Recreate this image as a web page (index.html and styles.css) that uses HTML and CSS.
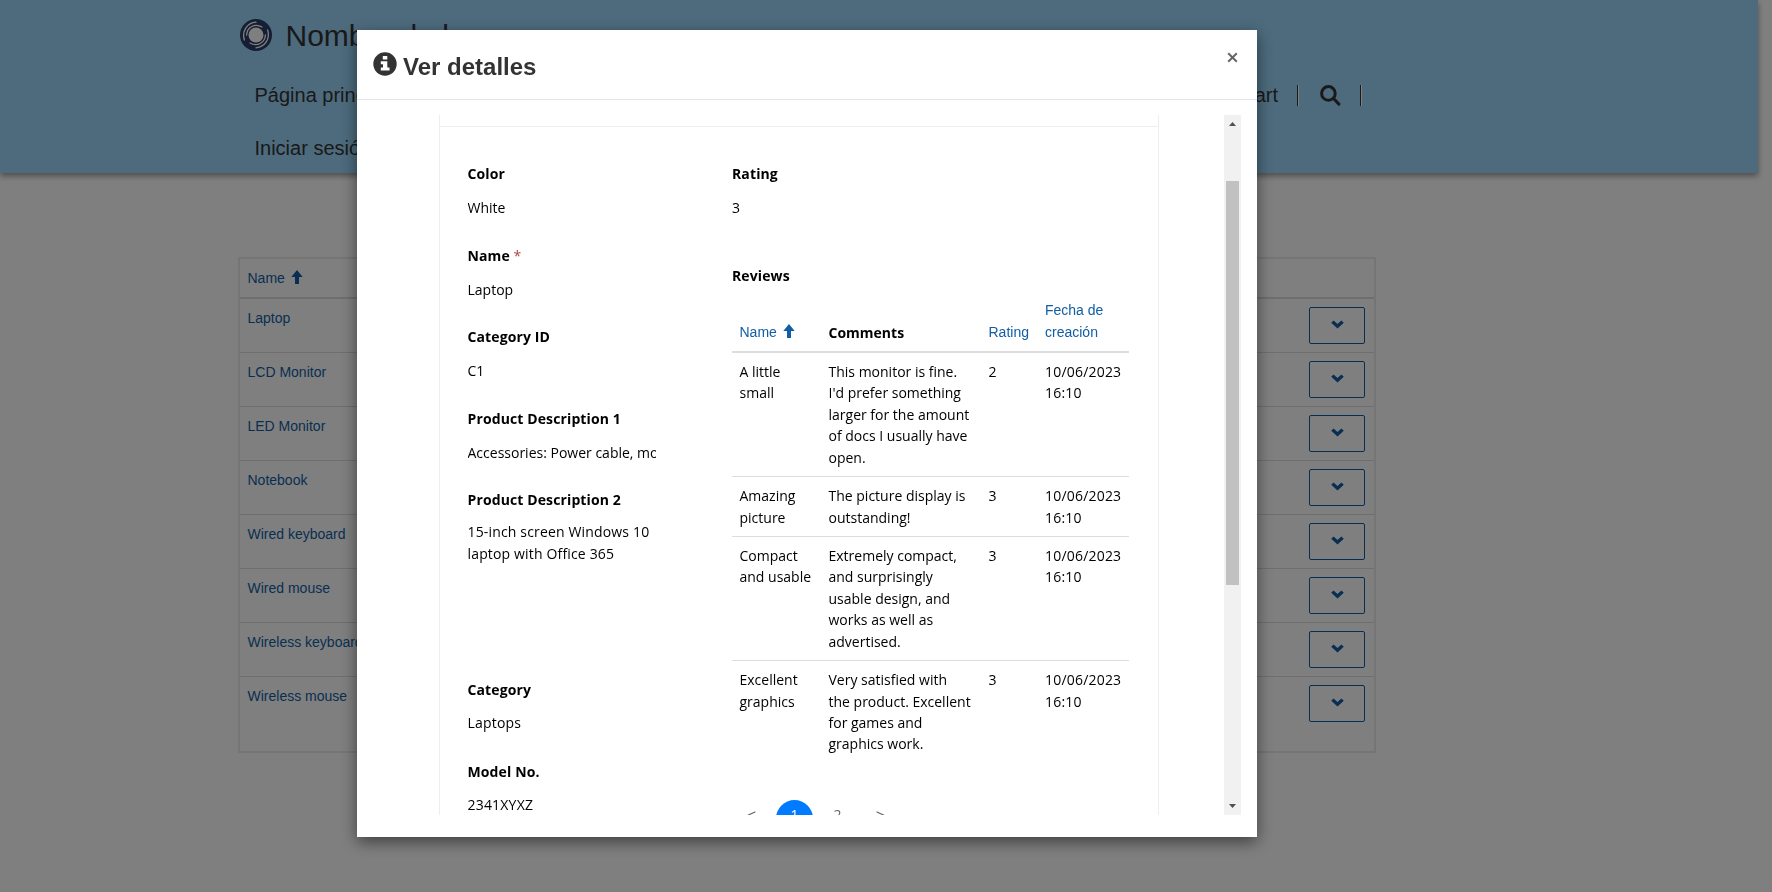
FILE: index.html
```html
<!DOCTYPE html>
<html lang="es">
<head>
    <meta charset="UTF-8">
    <meta name="viewport" content="width=device-width, initial-scale=1.0">
    <title>Ver detalles</title>
    <link rel="stylesheet" href="styles.css">
</head>
<body>
    <!-- shared icons -->
    <svg class="sprite">
        <symbol id="arrow-up" viewBox="0 0 12 14"><path d="M6 0L11.7 7H8V14H4V7H.3z"/></symbol>
        <symbol id="chevron" viewBox="0 0 13 9"><path d="M2.6.4L6.5 4.1 10.4.4 12.8 2.8 6.5 8.6.2 2.8z"/></symbol>
    </svg>

    <header class="header">
        <div class="brand">
            <svg class="logo" viewBox="0 0 32 32">
                <circle cx="16" cy="16" r="16" fill="#2a3d66"/>
                <circle cx="16" cy="16" r="7.5" fill="#fff"/>
                <g fill="none" stroke="#fff" stroke-width="1.3" stroke-linecap="round">
                    <path d="M4.4 21C1.5 12 7 4 16 3.2"/>
                    <path d="M6.6 16C7 8 15 4 22 8"/>
                    <path d="M27.6 11C30.5 20 25 28 16 28.8"/>
                    <path d="M25.4 16C25 24 17 28 10 24"/>
                </g>
            </svg>
            <span class="brand-name">Nombre de la empresa</span>
        </div>
        <nav class="nav">
            <a class="nav-link">Página principal</a>
            <div class="nav-right">
                <a class="nav-link">Shopping cart</a>
                <span class="divider"></span>
                <svg class="search" viewBox="0 0 21 21"><circle cx="8.4" cy="8.4" r="6.8"/><path d="M13.3 13.3l5.6 5.8"/></svg>
                <span class="divider"></span>
            </div>
        </nav>
        <nav class="nav nav-second">
            <a class="nav-link">Iniciar sesión</a>
        </nav>
    </header>

    <main class="list">
        <div class="list-head">Name <svg class="sort"><use href="#arrow-up"/></svg></div>
        <div class="list-row"><a>Laptop</a><button class="drop"><svg><use href="#chevron"/></svg></button></div>
        <div class="list-row"><a>LCD Monitor</a><button class="drop"><svg><use href="#chevron"/></svg></button></div>
        <div class="list-row"><a>LED Monitor</a><button class="drop"><svg><use href="#chevron"/></svg></button></div>
        <div class="list-row"><a>Notebook</a><button class="drop"><svg><use href="#chevron"/></svg></button></div>
        <div class="list-row"><a>Wired keyboard</a><button class="drop"><svg><use href="#chevron"/></svg></button></div>
        <div class="list-row"><a>Wired mouse</a><button class="drop"><svg><use href="#chevron"/></svg></button></div>
        <div class="list-row"><a>Wireless keyboard</a><button class="drop"><svg><use href="#chevron"/></svg></button></div>
        <div class="list-row"><a>Wireless mouse</a><button class="drop"><svg><use href="#chevron"/></svg></button></div>
    </main>

    <div class="overlay">
        <div class="modal">
            <div class="modal-header">
                <svg class="info" viewBox="0 0 24 24">
                    <circle cx="12" cy="12" r="11.7" fill="#333"/>
                    <path fill="#fff" d="M9.8 4h4.5v3.5H9.8zM7.8 9.3h6.5v6.3h2.2v3H7.8v-3h2.2v-3.3H7.8z"/>
                </svg>
                <h1>Ver detalles</h1>
                <svg class="close" viewBox="0 0 11 11"><path d="M1.2 1.2l8.6 8.6M9.8 1.2L1.2 9.8"/></svg>
            </div>
            <div class="modal-body">
                <div class="form">
                    <div class="form-top"></div>
                    <div class="columns">
                        <div class="col-left">
                            <div class="field"><label>Color</label><p>White</p></div>
                            <div class="field"><label>Name <span class="required">*</span></label><p>Laptop</p></div>
                            <div class="field"><label>Category ID</label><p>C1</p></div>
                            <div class="field"><label>Product Description 1</label><p>Accessories: Power cable, mouse</p></div>
                            <div class="field field-area"><label>Product Description 2</label><p>15-inch screen Windows 10<br>laptop with Office 365</p></div>
                            <div class="field field-lookup"><label>Category</label><p>Laptops</p></div>
                            <div class="field field-lookup"><label>Model No.</label><p>2341XYXZ</p></div>
                        </div>
                        <div class="col-right">
                            <div class="field field-rating"><label>Rating</label><p>3</p></div>
                            <label>Reviews</label>
                            <table class="reviews">
                                <thead>
                                    <tr>
                                        <th class="c-name"><a>Name <svg class="sort"><use href="#arrow-up"/></svg></a></th>
                                        <th class="c-comments">Comments</th>
                                        <th class="c-rating"><a>Rating</a></th>
                                        <th class="c-date"><a>Fecha de<br>creación</a></th>
                                    </tr>
                                </thead>
                                <tbody>
                                    <tr>
                                        <td>A little<br>small</td>
                                        <td>This monitor is fine.<br>I'd prefer something<br>larger for the amount<br>of docs I usually have<br>open.</td>
                                        <td>2</td>
                                        <td class="date">10/06/2023<br>16:10</td>
                                    </tr>
                                    <tr>
                                        <td>Amazing<br>picture</td>
                                        <td>The picture display is<br>outstanding!</td>
                                        <td>3</td>
                                        <td class="date">10/06/2023<br>16:10</td>
                                    </tr>
                                    <tr>
                                        <td>Compact<br>and usable</td>
                                        <td>Extremely compact,<br>and surprisingly<br>usable design, and<br>works as well as<br>advertised.</td>
                                        <td>3</td>
                                        <td class="date">10/06/2023<br>16:10</td>
                                    </tr>
                                    <tr>
                                        <td>Excellent<br>graphics</td>
                                        <td>Very satisfied with<br>the product. Excellent<br>for games and<br>graphics work.</td>
                                        <td>3</td>
                                        <td class="date">10/06/2023<br>16:10</td>
                                    </tr>
                                </tbody>
                            </table>
                            <div class="pagination">
                                <a class="arrow">&lt;</a>
                                <a class="active">1</a>
                                <a>2</a>
                                <a class="arrow">&gt;</a>
                            </div>
                        </div>
                    </div>
                </div>
                <div class="scrollbar">
                    <svg viewBox="0 0 17 17"><path d="M5 11h7L8.5 7z"/></svg>
                    <div class="thumb"></div>
                    <svg viewBox="0 0 17 17"><path d="M5 6h7L8.5 10z"/></svg>
                </div>
            </div>
        </div>
    </div>
</body>
</html>
```
FILE: styles.css
```css
* {
    box-sizing: border-box;
}

body {
    margin: 0;
    height: 892px;
    overflow: hidden;
    background-color: #fff;
    font-family: Arial, "Liberation Sans", sans-serif;
    font-size: 14px;
    line-height: 20px;
    color: #000;
}

.sprite {
    display: none;
}

/* header */
.header {
    width: 1758px;
    height: 173px;
    padding: 15px 0 0 240px;
    background-color: #9ad7fb;
    box-shadow: 0 3px 6px rgba(0, 0, 0, 0.4);
    color: #333;
}

.brand {
    display: flex;
    align-items: center;
    height: 40px;
    gap: 13.5px;
}

.logo {
    width: 32px;
    height: 32px;
}

.brand-name {
    padding-top: 2px;
    font-size: 30px;
    line-height: 40px;
}

.nav {
    display: flex;
    justify-content: space-between;
    align-items: center;
    width: 1122px;
    height: 24px;
    margin-top: 28px;
    padding-left: 14.5px;
}

.nav-second {
    margin-top: 29px;
}

.nav-link {
    font-size: 20px;
    line-height: 24px;
}

.nav-right {
    display: flex;
    align-items: center;
}

.divider {
    width: 2px;
    height: 21px;
    margin-left: 19px;
    border-left: 1px solid #333;
    border-right: 1px solid #fff;
}

.search {
    width: 21px;
    height: 21px;
    margin: 1px 0 0 21px;
    fill: none;
    stroke: #333;
    stroke-width: 3;
    stroke-linecap: round;
}

/* product list */
.list {
    width: 1138px;
    height: 496px;
    margin: 84px 0 0 238px;
    border: 2px solid #ebebeb;
    color: #115ea3;
}

.list-head {
    height: 40px;
    padding: 9px 7.5px;
    border-bottom: 2px solid #ddd;
}

.sort {
    width: 12px;
    height: 14px;
    margin-left: 2px;
    vertical-align: -1px;
    fill: #115ea3;
}

.list-row {
    display: flex;
    justify-content: space-between;
    height: 54px;
    padding: 8px 9px 8px 7.5px;
    border-bottom: 1px solid #ddd;
}

.list-row a {
    padding-top: 1px;
}

.list-row:last-child {
    border-bottom: none;
}

.drop {
    display: flex;
    align-items: center;
    justify-content: center;
    width: 56px;
    height: 37px;
    padding: 0 0 2px;
    border: 1px solid #115ea3;
    border-radius: 2px;
    background: none;
}

.drop svg {
    width: 13px;
    height: 9px;
    fill: #115ea3;
}

/* modal */
.overlay {
    position: fixed;
    inset: 0;
    padding: 30px 158px 0 0;
    background-color: rgba(0, 0, 0, 0.5);
}

.modal {
    width: 900px;
    height: 807px;
    margin: 0 auto;
    background-color: #fff;
    box-shadow: 0 5px 15px rgba(0, 0, 0, 0.5);
}

.modal-header {
    display: flex;
    height: 70px;
    padding: 0 19px 0 15.5px;
    border-bottom: 1px solid #e5e5e5;
}

.info {
    width: 24px;
    height: 24px;
    margin-top: 22px;
}

.modal-header h1 {
    flex: 1;
    margin: 20px 0 0 6.5px;
    font-size: 24px;
    line-height: 34px;
    color: #333;
}

.close {
    width: 11px;
    height: 11px;
    margin-top: 22px;
    fill: none;
    stroke: #666;
    stroke-width: 2;
}

.modal-body {
    display: flex;
    justify-content: space-between;
    height: 700px;
    margin-top: 15px;
    padding: 0 16px 0 82px;
    overflow: hidden;
}

.form {
    width: 720px;
    height: 700px;
    overflow: hidden;
    border-left: 1px solid #eee;
    border-right: 1px solid #eee;
    font-family: "Segoe UI", "Open Sans", sans-serif;
    font-size: 14px;
    line-height: 21.43px;
}

.form-top {
    height: 12px;
    border-bottom: 1px solid #eee;
}

.columns {
    display: flex;
    padding: 36px 29px 0 27.5px;
}

.col-left {
    width: 188.5px;
    margin-right: 76px;
}

.col-right {
    width: 397px;
}

label {
    display: block;
    height: 22px;
    font-weight: 700;
    letter-spacing: 0.12px;
}

.required {
    font-weight: 400;
    color: #a94442;
}

.field {
    height: 81.6px;
}

.field p {
    margin: 12px 0 0;
    overflow: hidden;
    white-space: nowrap;
}

.field-area {
    height: 189.4px;
}

.field-area p {
    margin-top: 10px;
    letter-spacing: 0.16px;
}

.field-lookup {
    height: 82px;
}

.field-lookup p {
    margin-top: 11px;
    letter-spacing: 0.2px;
}

.field-rating {
    height: 102px;
}

/* reviews table */
.reviews {
    width: 397px;
    margin-top: 12px;
    border-collapse: separate;
    border-spacing: 0;
    table-layout: fixed;
}

.reviews th {
    padding: 0 7.5px 7px;
    border-bottom: 2px solid #ddd;
    text-align: left;
    vertical-align: bottom;
    white-space: nowrap;
}

.reviews th a {
    font-family: Arial, "Liberation Sans", sans-serif;
    font-weight: 400;
    color: #115ea3;
}

.c-name {
    width: 89px;
}

.c-comments {
    width: 160px;
}

.c-rating {
    width: 56.5px;
}

.reviews td {
    padding: 8px 7.5px;
    border-bottom: 1px solid #ddd;
    vertical-align: top;
    white-space: nowrap;
}

.reviews .date {
    letter-spacing: 0.2px;
}

.reviews tr:last-child td {
    border-bottom: none;
}

.pagination {
    display: flex;
    margin-top: 37px;
    padding-left: 1px;
    gap: 6px;
}

.pagination a {
    width: 37px;
    height: 37px;
    line-height: 30px;
    border-radius: 50%;
    text-align: center;
    color: #666;
}

.pagination .arrow {
    font-family: Arial, "Liberation Sans", sans-serif;
    font-size: 16px;
    line-height: 32px;
}

.pagination .active {
    background-color: #007bff;
    color: #fff;
}

/* scrollbar */
.scrollbar {
    display: flex;
    flex-direction: column;
    align-items: center;
    width: 17px;
    height: 700px;
    background-color: #f1f1f1;
}

.scrollbar svg {
    width: 17px;
    height: 17px;
    fill: #505050;
}

.thumb {
    width: 13px;
    height: 404px;
    margin: 49px 0 213px;
    background-color: #c1c1c1;
}
```
